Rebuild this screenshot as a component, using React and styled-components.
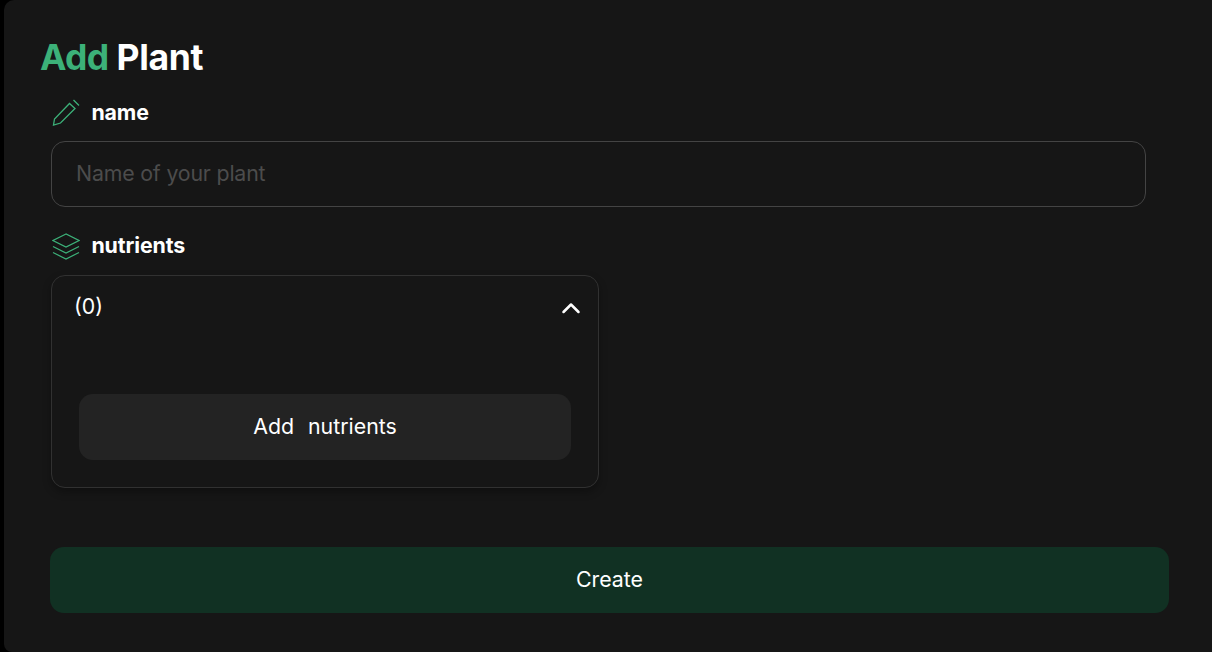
import React from "react";
import styled, { createGlobalStyle } from "styled-components";

const Global = createGlobalStyle`
  * { box-sizing: border-box; }
  body { margin: 0; background: #000; color: #fff; font-family: Inter, sans-serif; overflow: hidden; }
  button, input { font: inherit; color: inherit; }
`;
const Panel = styled.main`
  height: 652px;
  margin-left: 4px;
  padding: 36px 43px 39px 46px;
  background: #161616;
  border-radius: 10px 0 0 8px;
  display: flex;
  flex-direction: column;
  font-size: 21.33px;
`;
const Title = styled.h1`
  margin: 0 0 0 -10px;
  font-size: 35.5px;
  line-height: 44px;
  font-weight: 700;
  letter-spacing: -0.3px;
`;
const Accent = styled.span`
  color: #3cb179;
  letter-spacing: -0.7px;
`;
const Label = styled.label`
  display: flex;
  align-items: center;
  gap: 12.4px;
  height: 26px;
  margin-top: ${(p) => p.$top}px;
  margin-bottom: 2px;
  padding-left: 1px;
  font-weight: 750;
  letter-spacing: -0.1px;
  svg { width: 28px; height: 28px; stroke: #3cb179; fill: none; transform: translate(1px, ${(p) => p.$shift}px); }
`;
const Input = styled.input`
  width: 1095px;
  height: 66px;
  margin: 14px 0 0 1px;
  padding: 0 24px 2px;
  border: 1px solid #444;
  border-radius: 14px;
  background: transparent;
  outline: none;
  letter-spacing: -0.18px;
  &::placeholder { color: #4c4c4c; opacity: 1; }
`;
const Dropdown = styled.section`
  width: 548px;
  height: 213px;
  margin: 15px 0 0 1px;
  padding: 16px 27px 27px;
  border: 1px solid #313131;
  border-radius: 14px;
  box-shadow: 0 4px 8px rgba(0, 0, 0, 0.3);
  display: flex;
  flex-direction: column;
  justify-content: space-between;
`;
const Summary = styled.div`
  display: flex;
  justify-content: space-between;
  align-items: center;
  margin: 0 -10px 0 -5px;
  line-height: 28px;
  svg { width: 20px; height: 20px; margin-top: 2px; }
`;
const Button = styled.button`
  width: 100%;
  height: 66px;
  padding: 0 6px 2px;
  border: 0;
  border-radius: 14px;
  background: ${(p) => (p.$primary ? "#113123" : "#232323")};
  word-spacing: ${(p) => (p.$primary ? 0 : 8)}px;
`;
const Footer = styled.footer`margin-top: auto;`;

export default function App() {
  return (
    <>
      <Global />
      <Panel>
        <Title><Accent>Add</Accent> Plant</Title>
        <Label $top={19} $shift={1} htmlFor="name">
          <svg viewBox="0 0 28 28" strokeWidth="1.3"><path d="M1.5 26l1-6L17.5 4.5l5.5 5L8.5 24zM21.5 1l5.5 5.5" /></svg>
          name
        </Label>
        <Input id="name" placeholder="Name of your plant" />
        <Label as="div" $top={25} $shift={2}>
          <svg viewBox="0 0 28 28" strokeWidth="1.2"><path d="M14 1L1 7.5 14 14l13-6.5zM1 13.5L14 20l13-6.5M1 19.5L14 26l13-6.5" /></svg>
          nutrients
        </Label>
        <Dropdown>
          <Summary>(0)<svg viewBox="0 0 20 20" fill="none" stroke="#fff" strokeWidth="2.5" strokeLinecap="round" strokeLinejoin="round"><path d="M2.5 15l7.5-7.5 7.5 7.5" /></svg></Summary>
          <Button>Add nutrients</Button>
        </Dropdown>
        <Footer><Button $primary>Create</Button></Footer>
      </Panel>
    </>
  );
}
